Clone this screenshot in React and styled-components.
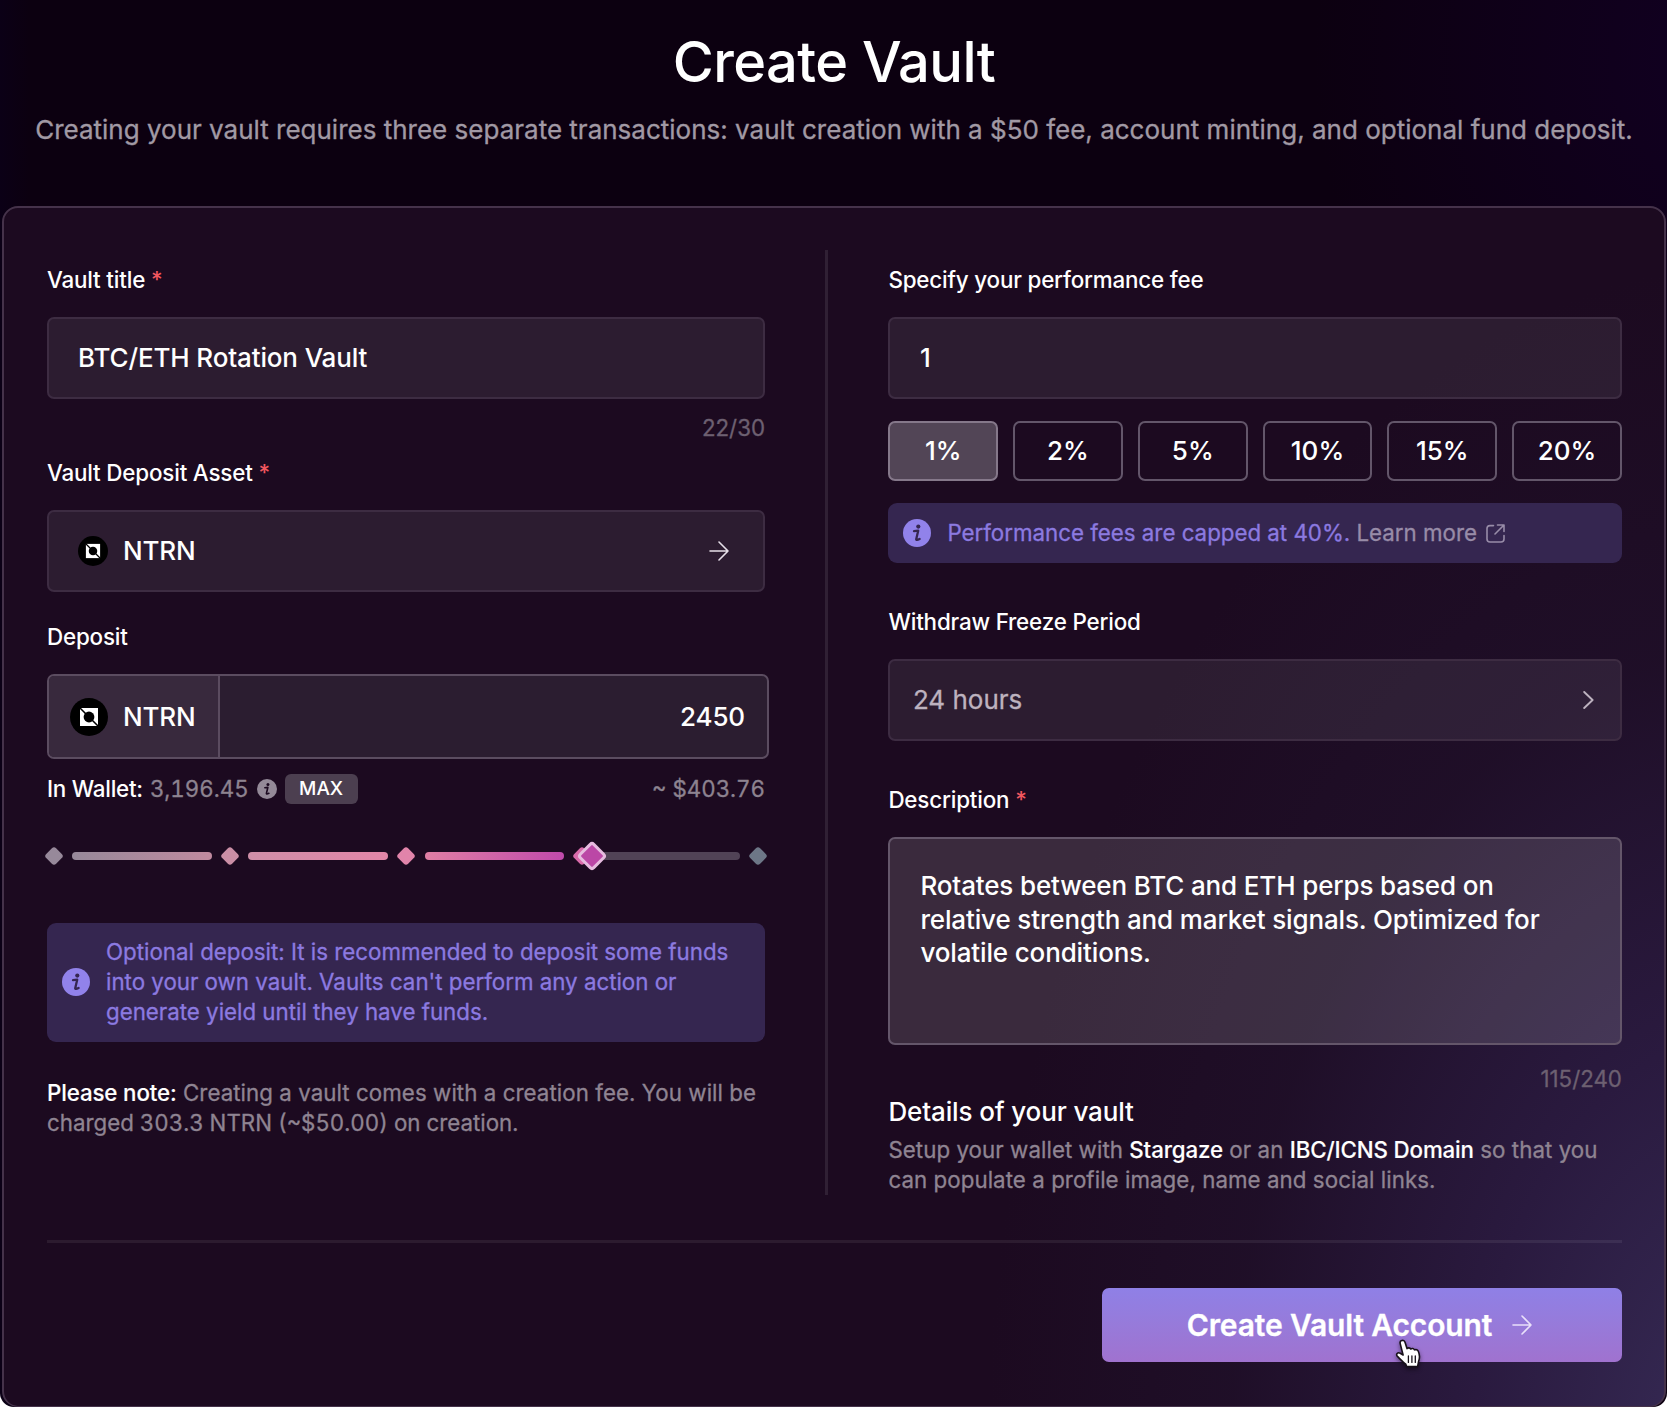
import React from "react";
import styled, { createGlobalStyle } from "styled-components";

const GlobalStyle = createGlobalStyle`
  * { box-sizing: border-box; }
  html, body { margin: 0; background: #ffffff; }
  body {
    font-family: Inter, "Liberation Sans", sans-serif;
    color: #ffffff;
    -webkit-font-smoothing: antialiased;
  }
  button, input, textarea { font: inherit; color: inherit; letter-spacing: inherit; }
`;

const Page = styled.main`
  width: 1667px;
  height: 1407px;
  overflow: hidden;
  display: flex;
  flex-direction: column;
  border-radius: 0 0 14px 14px;
  background:
    radial-gradient(ellipse 420px 480px at 104% 4%, rgba(20, 0, 42, 0.7), transparent),
    linear-gradient(90deg, #0b0016 0, #0c0010 30px, #0c0010 100%);
`;

const Header = styled.header`
  height: 206px;
  flex: none;
  text-align: center;
  padding: 27px 0 0 1px;
`;

const Title = styled.h1`
  margin: 0;
  font-size: 56px;
  line-height: 70px;
  font-weight: 500;
  letter-spacing: -0.56px;
`;

const Subtitle = styled.p`
  margin: 17px 0 0;
  font-size: 26px;
  line-height: 32px;
  color: #a199a4;
  -webkit-text-stroke: 0.3px currentColor;
  white-space: nowrap;
`;

const Panel = styled.section`
  flex: 1;
  margin: 0 1px 0 2px;
  padding: 42px 42px 43px 43px;
  border: 2px solid #45324a;
  border-bottom-width: 1px;
  border-radius: 16px;
  background:
    radial-gradient(ellipse 760px 1200px at 105% 105%, #382d58 0%, #2a1a3f 36%, rgba(32, 16, 42, 0.75) 68%, rgba(28, 10, 32, 0) 100%),
    #1c0a20;
`;

const Columns = styled.div`
  display: flex;
`;

const Column = styled.div`
  width: ${(p) => p.$width}px;
  flex: none;
  padding-top: 15px;
  display: flex;
  flex-direction: column;
`;

const ColumnDivider = styled.div`
  width: 3px;
  flex: none;
  margin: 0 60px 0 60.4px;
  background: rgba(255, 255, 255, 0.09);
`;

const Label = styled.label`
  display: block;
  margin-top: ${(p) => p.$top || 0}px;
  margin-bottom: 22px;
  font-size: 22.4px;
  line-height: 30px;
  font-weight: 500;
  letter-spacing: -0.18px;
`;

const Required = styled.span`
  color: #f2575f;
`;

const Field = styled.div`
  height: 82px;
  display: flex;
  align-items: center;
  gap: 15px;
  padding: 0 ${(p) => p.$right || 30}px 1px ${(p) => p.$left || 30}px;
  border: 2px solid #3d2c42;
  border-radius: 7px;
  background: rgba(255, 255, 255, 0.075);
  font-size: 26px;
  font-weight: ${(p) => (p.$muted ? 400 : 500)};
  letter-spacing: ${(p) => (p.$muted ? 0 : -0.14)}px;
  color: ${(p) => (p.$muted ? "#bdb2bf" : "#ffffff")};
  -webkit-text-stroke: ${(p) => (p.$muted ? 0.3 : 0)}px currentColor;
`;

const FieldInput = styled.input`
  width: 100%;
  padding: 0;
  border: 0;
  outline: 0;
  background: transparent;
`;

const FieldText = styled.span`
  flex: 1;
`;

const Counter = styled.div`
  margin-top: ${(p) => p.$top}px;
  text-align: right;
  font-size: 22.3px;
  line-height: 30px;
  color: #6d6071;
  -webkit-text-stroke: 0.3px currentColor;
`;

const DepositField = styled.div`
  width: 722px;
  height: 85px;
  display: flex;
  border: 2px solid #5b4c60;
  border-radius: 7px;
  background: #2b1d30;
  font-size: 26px;
  font-weight: 500;
  letter-spacing: -0.14px;
  overflow: hidden;
`;

const DepositAsset = styled.div`
  width: 171px;
  display: flex;
  align-items: center;
  gap: 15px;
  padding-left: 21px;
  border-right: 2px solid #5b4c60;
  background: #38293d;
`;

const DepositInput = styled.input`
  flex: 1;
  min-width: 0;
  padding: 0 22px;
  border: 0;
  outline: 0;
  text-align: right;
  background: transparent;
`;

const WalletRow = styled.div`
  height: 30px;
  margin-top: 15px;
  display: flex;
  align-items: center;
  font-size: 22.4px;
  line-height: 30px;
`;

const WalletLabel = styled.span`
  font-weight: 500;
  letter-spacing: -0.25px;
  margin-right: 7px;
`;

const WalletAmount = styled.span`
  color: #8d8390;
  font-size: 22.3px;
  font-variant-numeric: tabular-nums;
  -webkit-text-stroke: 0.3px currentColor;
`;

const WalletHint = styled.span`
  margin: 0 8px;
`;

const MaxButton = styled.button`
  width: 73px;
  height: 30px;
  padding: 0;
  border: 0;
  border-radius: 6px;
  background: #4c3f50;
  font-size: 19px;
  font-weight: 500;
  line-height: 30px;
`;

const WalletValue = styled(WalletAmount)`
  margin-left: auto;
`;

const SliderRow = styled.div`
  position: relative;
  height: 30px;
  margin: 37px 0 52px -3px;
  width: 724px;
  display: flex;
  align-items: center;
  justify-content: space-between;
`;

const Stop = styled.span`
  width: 14px;
  height: 14px;
  margin: 0 3px;
  flex: none;
  border-radius: 3px;
  transform: rotate(45deg);
  background: ${(p) => p.$color};
`;

const Track = styled.span`
  width: 139.5px;
  height: 8px;
  border-radius: 4px;
  background: ${(p) => p.$fill};
`;

const Thumb = styled.span`
  position: absolute;
  left: 537px;
  top: 4px;
  width: 22px;
  height: 22px;
  border: 3.5px solid #e6bbdf;
  border-radius: 4px;
  background: #bb47a6;
  transform: rotate(45deg);
`;

const OpenTrack = styled(Track)`
  width: 150px;
  margin-left: -11px;
`;

const Notice = styled.div`
  height: ${(p) => p.$height}px;
  display: flex;
  align-items: center;
  gap: 16px;
  padding: 0 15px 1px;
  border-radius: 9px;
  background: #352650;
  color: #8c7ae0;
  font-size: 22.3px;
  line-height: 29.8px;
  -webkit-text-stroke: 0.3px currentColor;
  white-space: nowrap;
`;

const LearnMore = styled.a`
  display: inline-flex;
  align-items: center;
  gap: 9px;
  color: #988ca8;

  svg { margin-top: 3px; }
`;

const Note = styled.p`
  margin: ${(p) => p.$top}px 0 0;
  color: #8f8492;
  font-size: 22.3px;
  line-height: 29.8px;
  letter-spacing: 0.06px;
  -webkit-text-stroke: 0.3px currentColor;
  white-space: nowrap;

  strong {
    color: #ffffff;
    font-weight: 500;
    letter-spacing: -0.12px;
    -webkit-text-stroke: 0.15px currentColor;
  }
`;

const Figures = styled.span`
  font-variant-numeric: tabular-nums;
  letter-spacing: 0;
`;

const FeeOptions = styled.div`
  display: grid;
  grid-template-columns: repeat(6, 1fr);
  gap: 15px;
  margin: 22px 0;
`;

const FeeButton = styled.button`
  height: 60px;
  padding: 0 0 2px 0;
  border: 2px solid ${(p) => (p.$active ? "#85788a" : "#63566a")};
  border-radius: 7px;
  background: ${(p) => (p.$active ? "#524556" : "transparent")};
  font-size: 26px;
  font-weight: 500;
`;

const Description = styled.textarea`
  display: block;
  width: 100%;
  height: 208px;
  padding: 30px 30px;
  border: 2px solid #64566a;
  border-radius: 7px;
  outline: 0;
  resize: none;
  overflow: hidden;
  background: rgba(255, 255, 255, 0.135);
  font-size: 26px;
  line-height: 33.5px;
  font-weight: 500;
  letter-spacing: -0.14px;
`;

const SectionTitle = styled.h2`
  margin: 2px 0 0;
  font-size: 26px;
  line-height: 32px;
  font-weight: 500;
  letter-spacing: -0.13px;
`;

const Rule = styled.hr`
  height: 3px;
  margin: 45px 0;
  border: 0;
  background: rgba(255, 255, 255, 0.07);
`;

const Actions = styled.div`
  display: flex;
  justify-content: flex-end;
`;

const SubmitButton = styled.button`
  position: relative;
  width: 520px;
  height: 74px;
  display: flex;
  align-items: center;
  justify-content: center;
  gap: 20px;
  padding: 0 5px 0 0;
  border: 0;
  border-radius: 7px;
  background: linear-gradient(180deg, #8f80e6 0%, #967bdb 45%, #a072cf 100%);
  font-size: 30px;
  font-weight: 600;
  letter-spacing: -0.14px;
  -webkit-text-stroke: 0.3px currentColor;
`;

const Cursor = styled.svg`
  position: absolute;
  left: 292px;
  top: 50px;
  filter: drop-shadow(0 2px 2px rgba(0, 0, 0, 0.45));
`;

const Icon = styled.svg`
  flex: none;
  display: block;
`;

function TokenLogo({ size }) {
  return (
    <Icon width={size} height={size} viewBox="0 0 38 38">
      <circle cx="19" cy="19" r="19" fill="#000" />
      <rect x="10" y="10" width="18" height="18" fill="#fff" />
      <circle cx="19" cy="19" r="5.4" fill="#000" />
      <path d="M9.5 9.5 L28.5 28.5" stroke="#000" strokeWidth="1.6" />
    </Icon>
  );
}

function InfoIcon({ size, color, ink }) {
  return (
    <Icon width={size} height={size} viewBox="0 0 28 28">
      <circle cx="14" cy="14" r="14" fill={color} />
      <circle cx="15.3" cy="7.6" r="2.1" fill={ink} />
      <path
        d="M11 12.2 L15.2 11.7 L13.2 20.2 Q13.2 21.6 16.6 20"
        fill="none"
        stroke={ink}
        strokeWidth="2.3"
        strokeLinejoin="round"
        strokeLinecap="round"
      />
    </Icon>
  );
}

function ArrowRight({ color }) {
  return (
    <Icon width="20" height="20" viewBox="0 0 20 20" fill="none" stroke={color} strokeWidth="1.6" strokeLinecap="round" strokeLinejoin="round">
      <path d="M1 10 H19 M10 1 L19 10 L10 19" />
    </Icon>
  );
}

function ChevronRight() {
  return (
    <Icon width="11" height="18" viewBox="0 0 11 18" fill="none" stroke="#bdb2bf" strokeWidth="1.9" strokeLinecap="round" strokeLinejoin="round">
      <path d="M1.2 1 L9.6 9 L1.2 17" />
    </Icon>
  );
}

function ExternalLink() {
  return (
    <Icon width="19" height="19" viewBox="0 0 19 19" fill="none" stroke="#988ca8" strokeWidth="1.6" strokeLinecap="round" strokeLinejoin="round">
      <path d="M7.5 1.6 H4 Q1 1.6 1 4.6 V15 Q1 18 4 18 H15 Q18 18 18 15 V11.5" />
      <path d="M11.5 1 H18 V7.5 M18 1 L9 10" />
    </Icon>
  );
}

function HandCursor() {
  return (
    <Cursor width="30" height="32" viewBox="0 0 30 32">
      <path
        d="M7.6 2.6 C9.2 1.8 10.6 3 11.1 4.6 L13 10.6 C14.2 9.4 16 9.7 16.7 11 C18 10 19.8 10.5 20.5 11.9 C22 11.1 23.8 11.9 24.5 13.7 C25.6 16.6 26 20 24.6 23.4 L23.6 28.6 H12.6 L11.8 26.2 C9.4 24.4 6.6 21.5 3.4 18.4 C1.6 16.4 3.6 13.9 6.2 15.2 L9.1 17 L6.2 5.6 C5.8 4.2 6.4 3.1 7.6 2.6 Z"
        fill="#fff"
        stroke="#171019"
        strokeWidth="1.6"
        strokeLinejoin="round"
      />
      <path d="M14.4 18 V24.4 M17.9 18 V24.4 M21.3 18 V24.4" stroke="#171019" strokeWidth="1.3" strokeLinecap="round" />
    </Cursor>
  );
}

const fees = ["1%", "2%", "5%", "10%", "15%", "20%"];

export default function App() {
  return (
    <>
      <GlobalStyle />
      <Page>
        <Header>
          <Title>Create Vault</Title>
          <Subtitle>
            Creating your vault requires three separate transactions: vault creation with a $50 fee, account minting, and optional fund deposit.
          </Subtitle>
        </Header>

        <Panel>
          <Columns>
            <Column $width={718}>
              <Label>
                Vault title <Required>*</Required>
              </Label>
              <Field $left={29}>
                <FieldInput defaultValue="BTC/ETH Rotation Vault" />
              </Field>
              <Counter $top={14}>22/30</Counter>

              <Label $top={15}>
                Vault Deposit Asset <Required>*</Required>
              </Label>
              <Field $left={29} $right={34}>
                <TokenLogo size={30} />
                <FieldText>NTRN</FieldText>
                <ArrowRight color="#e6dfe8" />
              </Field>

              <Label $top={30}>Deposit</Label>
              <DepositField>
                <DepositAsset>
                  <TokenLogo size={38} />
                  <span>NTRN</span>
                </DepositAsset>
                <DepositInput defaultValue="2450" />
              </DepositField>
              <WalletRow>
                <WalletLabel>In Wallet:</WalletLabel>
                <WalletAmount>3,196.45</WalletAmount>
                <WalletHint>
                  <InfoIcon size={20} color="#948a98" ink="#1c0a20" />
                </WalletHint>
                <MaxButton>MAX</MaxButton>
                <WalletValue>~ $403.76</WalletValue>
              </WalletRow>

              <SliderRow>
                <Stop $color="#97899a" />
                <Track $fill="linear-gradient(90deg, #97899a, #c08a9f)" />
                <Stop $color="#cb8fa6" />
                <Track $fill="linear-gradient(90deg, #cf8fa8, #e386a8)" />
                <Stop $color="#e184aa" />
                <Track $fill="linear-gradient(90deg, #e07fa4, #c04aab)" />
                <Stop $color="#d96bab" />
                <OpenTrack $fill="#514356" />
                <Stop $color="#6d7787" />
                <Thumb />
              </SliderRow>

              <Notice $height={119}>
                <InfoIcon size={28} color="#9182ea" ink="#352650" />
                <span>
                  Optional deposit: It is recommended to deposit some funds
                  <br />
                  into your own vault. Vaults can't perform any action or
                  <br />
                  generate yield until they have funds.
                </span>
              </Notice>

              <Note $top={36}>
                <strong>Please note:</strong> Creating a vault comes with a creation fee. You will be
                <br />
                <Figures>charged 303.3 NTRN (~$50.00) on creation.</Figures>
              </Note>
            </Column>

            <ColumnDivider />

            <Column $width={733.5}>
              <Label>Specify your performance fee</Label>
              <Field $left={29.5}>
                <FieldInput defaultValue="1" />
              </Field>
              <FeeOptions>
                {fees.map((fee, i) => (
                  <FeeButton key={fee} $active={i === 0}>
                    {fee}
                  </FeeButton>
                ))}
              </FeeOptions>
              <Notice $height={60}>
                <InfoIcon size={28} color="#9182ea" ink="#352650" />
                <span>
                  Performance fees are capped at 40%.{" "}
                  <LearnMore>
                    Learn more <ExternalLink />
                  </LearnMore>
                </span>
              </Notice>

              <Label $top={44}>Withdraw Freeze Period</Label>
              <Field $muted $left={22.5} $right={26}>
                <FieldText>24 hours</FieldText>
                <ChevronRight />
              </Field>

              <Label $top={44}>
                Description <Required>*</Required>
              </Label>
              <Description
                defaultValue={
                  "Rotates between BTC and ETH perps based on\nrelative strength and market signals. Optimized for\nvolatile conditions."
                }
              />
              <Counter $top={19}>115/240</Counter>
              <SectionTitle>Details of your vault</SectionTitle>
              <Note $top={7}>
                Setup your wallet with <strong>Stargaze</strong> or an <strong>IBC/ICNS Domain</strong> so that you
                <br />
                can populate a profile image, name and social links.
              </Note>
            </Column>
          </Columns>

          <Rule />

          <Actions>
            <SubmitButton>
              Create Vault Account
              <ArrowRight color="#e9e0fa" />
              <HandCursor />
            </SubmitButton>
          </Actions>
        </Panel>
      </Page>
    </>
  );
}
